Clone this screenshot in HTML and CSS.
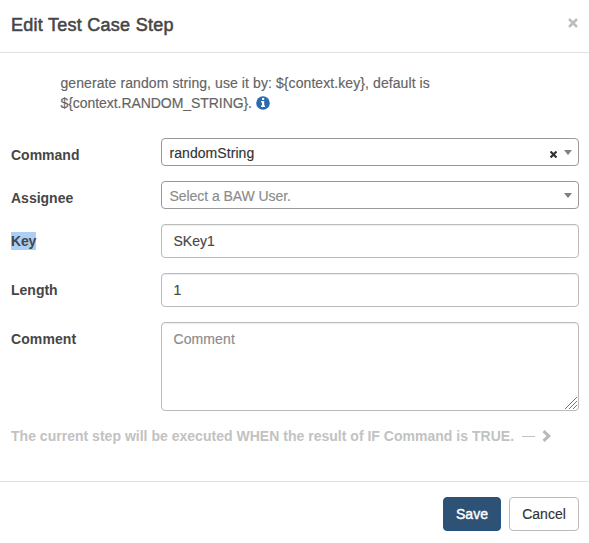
FILE: index.html
```html
<!DOCTYPE html>
<html lang="en">
<head>
<meta charset="utf-8">
<title>Edit Test Case Step</title>
<link rel="stylesheet" href="styles.css">
</head>
<body>
<div class="modal">
  <header class="modal-header">
    <h4 class="title">Edit Test Case Step</h4>
    <svg class="close" width="10" height="10" viewBox="0 0 10 10"><path d="M1 1L9 9M9 1L1 9"/></svg>
  </header>
  <main class="modal-body">
    <p class="help"><span class="help-intro">generate random string, use it by: ${context.key}, default is</span><br><span class="help-default">${context.RANDOM_STRING}.</span>
      <svg class="info" width="14" height="14" viewBox="0 0 14 14"><circle cx="7" cy="7" r="6.800" fill="#2b6cb0"/><path fill="#fff" d="M6 2h2.200v2H6zM5 5h3.200v4.500H9V11H5V9.500h1v-3H5z"/></svg>
    </p>
    <div class="row"><label class="label">Command</label>
      <div class="select"><span class="value">randomString</span>
        <svg class="clear" width="7" height="7" viewBox="0 0 7 7"><path d="M.5.5L6.500 6.500M6.500.5L.5 6.500"/></svg>
        <i class="arrow"></i></div></div>
    <div class="row"><label class="label">Assignee</label>
      <div class="select"><span class="value user muted">Select a BAW User.</span><i class="arrow"></i></div></div>
    <div class="row"><label class="label"><span class="selected">Key</span></label><div class="input">SKey1</div></div>
    <div class="row"><label class="label">Length</label><div class="input">1</div></div>
    <div class="row"><label class="label comment-label">Comment</label>
      <div class="input area muted">Comment
        <svg class="grip" width="14" height="14" viewBox="0 0 14 14"><path d="M1 13L13 1M5 13L13 5M9 13L13 9" stroke="#777"/></svg>
      </div></div>
    <div class="condition"><span class="condition-text">The current step will be executed WHEN the result of IF Command is TRUE.</span>
      <i class="dash"></i>
      <svg class="chevron" width="10" height="12" viewBox="0 0 10 12"><path d="M1.500 1.200L6.800 6L1.500 10.800"/></svg>
    </div>
  </main>
  <footer class="modal-footer">
    <button class="btn primary">Save</button>
    <button class="btn">Cancel</button>
  </footer>
</div>
</body>
</html>
```
FILE: styles.css
```css
* { box-sizing: border-box; }
body {
  margin: 0;
  background: #fff;
  color: #464646;
  font: 14px/20px "Liberation Sans", Arial, sans-serif;
}
.modal { height: 543px; overflow: hidden; }
.modal-header {
  display: flex;
  align-items: flex-start;
  justify-content: space-between;
  height: 53px;
  padding: 14px 11px 0;
  border-bottom: 1px solid #e0e0e0;
}
.title {
  margin: 0;
  font-size: 18px;
  line-height: 22px;
  font-weight: 400;
  letter-spacing: .26px;
  -webkit-text-stroke: .55px #464646;
}
.close { margin-top: 4px; fill: none; stroke: #bdbdbd; stroke-width: 2.500; }
.modal-body {
  display: flex;
  flex-direction: column;
  gap: 15px;
  height: 428px;
  padding: 20px 10px 0 11px;
}
.help {
  height: 40px;
  margin: 0 0 10px 49.500px;
  color: #636363;
  white-space: nowrap;
  -webkit-text-stroke: .15px #636363;
}
.help-intro { letter-spacing: .085px; }
.help-default { letter-spacing: -.06px; }
.info { vertical-align: -2px; }
.row { display: grid; grid-template-columns: 150px 1fr; align-items: start; }
.label { height: 27px; padding-top: 7px; font-weight: 700; }
.comment-label { letter-spacing: .1px; }
.selected {
  display: inline-block;
  height: 18px;
  line-height: 18px;
  background: #accef7;
  letter-spacing: -.2px;
}
.select {
  display: flex;
  align-items: flex-start;
  height: 28px;
  padding: 4px 6px 0 7.500px;
  border: 1px solid #999;
  border-radius: 4px;
  color: #333;
}
.value { flex: 1; letter-spacing: .06px; -webkit-text-stroke: .15px; }
.user { letter-spacing: -.06px; }
.clear { margin: 8px 7px 0 0; fill: none; stroke: #333; stroke-width: 2.200; }
.arrow {
  margin-top: 7px;
  border: 4px solid transparent;
  border-top: 5px solid #808080;
  border-bottom: 0;
}
.input {
  position: relative;
  height: 34px;
  padding: 6px 11.500px;
  border: 1px solid #bbb;
  border-radius: 4px;
  box-shadow: inset 0 1px 1px rgba(0, 0, 0, .075);
  -webkit-text-stroke: .15px;
}
.area { height: 89px; letter-spacing: .1px; }
.muted { color: #8b8b8b; }
.grip { position: absolute; right: 0; bottom: 0; fill: none; }
.condition {
  display: flex;
  align-items: center;
  height: 20px;
  color: #c2c2c2;
  font-weight: 700;
  white-space: nowrap;
}
.condition-text { letter-spacing: .018px; }
.dash { width: 13px; height: 1px; margin-left: 8px; background: #c2c2c2; }
.chevron { margin-left: 7px; fill: none; stroke: #b8b8b8; stroke-width: 3; }
.modal-footer {
  display: flex;
  justify-content: flex-end;
  gap: 8px;
  height: 62px;
  padding: 15px 10px 0;
  border-top: 1px solid #e0e0e0;
}
.btn {
  width: 70px;
  height: 34px;
  padding: 0;
  border: 1px solid #bbb;
  border-radius: 4px;
  background: #fff;
  color: #333;
  font: inherit;
  -webkit-text-stroke: .15px;
}
.primary {
  width: 58px;
  border-color: #245580;
  background: #2d5276;
  color: #fff;
  -webkit-text-stroke: .4px #fff;
}
```
